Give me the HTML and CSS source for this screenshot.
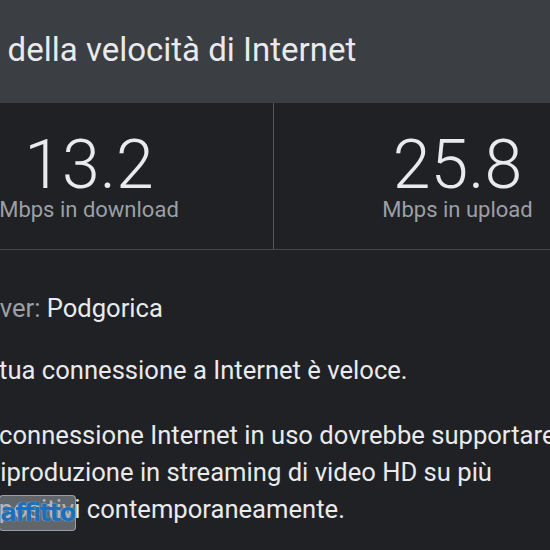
FILE: index.html
```html
<!DOCTYPE html>
<html lang="it">
<head>
<meta charset="utf-8">
<title>Test della velocità di Internet</title>
<link rel="stylesheet" href="styles.css">
</head>
<body>
<header class="hd">
  <h1 class="title">Test della velocità di Internet</h1>
</header>
<section class="stats">
  <div class="stat">
    <div class="num">13.2</div>
    <div class="lbl">Mbps in download</div>
  </div>
  <div class="stat">
    <div class="num">25.8</div>
    <div class="lbl">Mbps in upload</div>
  </div>
</section>
<main class="content">
  <p class="server"><span class="muted">Server:</span> Podgorica</p>
  <p class="verdict">La tua connessione a Internet è veloce.</p>
  <p class="desc">La connessione Internet in uso dovrebbe supportare<br>la riproduzione in streaming di video HD su più<br>dispositivi contemporaneamente.</p>
</main>
<span class="wm">affitto</span>
</body>
</html>
```
FILE: styles.css
```css
html, body {
  margin: 0;
  padding: 0;
}
body {
  background: #202124;
  font-family: Roboto, "Noto Sans", sans-serif;
  color: #e8eaed;
  overflow: hidden;
  width: 550px;
  height: 550px;
  position: relative;
}
.hd {
  background: #3b3e42;
  height: 103px;
  box-sizing: border-box;
  padding-top: 30px;
}
.title {
  margin: 0 0 0 -64px;
  font-size: 33px;
  line-height: 40px;
  font-weight: 400;
  color: #e8eaed;
  white-space: nowrap;
}
.stats {
  display: grid;
  grid-template-columns: 368px 368px;
  margin-left: -95px;
  width: 737px;
  border-bottom: 1px solid #44474b;
}
.stat {
  display: flex;
  flex-direction: column;
  align-items: center;
  padding: 30px 0 26px;
}
.stat + .stat {
  border-left: 1px solid #55585c;
}
.num {
  font-size: 68px;
  line-height: 64px;
  font-weight: 300;
  color: #e8eaed;
}
.lbl {
  font-size: 22px;
  line-height: 26px;
  color: #9aa0a6;
}
.content {
  margin-left: -35px;
  padding-top: 40px;
  white-space: nowrap;
}
.content p {
  margin: 0;
  font-size: 25.6px;
  line-height: 36px;
  color: #e8eaed;
}
.content .server {
  margin-left: -3px;
}
.muted {
  color: #9aa0a6;
}
.content .verdict {
  margin-top: 26px;
}
.content .desc {
  margin-top: 29px;
  line-height: 37px;
}
.wm {
  position: absolute;
  left: -1px;
  top: 495px;
  width: 77px;
  height: 36px;
  box-sizing: border-box;
  border-radius: 4px;
  border: 1px solid rgba(190, 196, 202, 0.6);
  background: rgba(140, 148, 156, 0.6);
  color: #1f6fb8;
  font-family: "DejaVu Sans", sans-serif;
  font-weight: 700;
  font-size: 25px;
  line-height: 34px;
  text-align: center;
  letter-spacing: -2px;
  text-shadow: 0 0 1px rgba(255, 255, 255, 0.8);
  overflow: hidden;
}
```
